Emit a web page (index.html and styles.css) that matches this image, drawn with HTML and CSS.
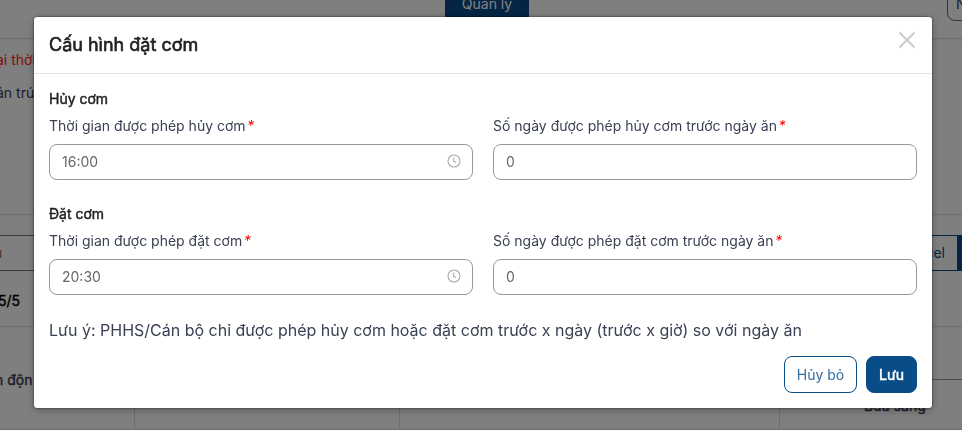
FILE: index.html
```html
<!DOCTYPE html>
<html lang="vi">
<head>
<meta charset="utf-8">
<title>Cấu hình đặt cơm</title>
<link rel="stylesheet" href="styles.css">
</head>
<body>
<div class="page">
  <header class="topbar">
    <div class="tab">Quản lý</div>
    <div class="account">N</div>
  </header>
  <section class="notes">
    <p class="note note-red">ại thời</p>
    <p class="note">án trú</p>
  </section>
  <section class="toolbar">
    <div class="search">ú</div>
    <div class="export">cel</div>
    <div class="export-more"></div>
  </section>
  <div class="count">5/5</div>
  <section class="table">
    <div class="cell cell-name">n độn</div>
    <div class="cell"></div>
    <div class="cell"></div>
    <div class="cell cell-meal"><div class="cell-head"></div><div class="meal">Bữa sáng</div></div>
  </section>
</div>
<div class="overlay">
  <div class="modal" role="dialog">
    <div class="modal-header">
      <h1 class="title">Cấu hình đặt cơm</h1>
      <svg class="close" viewBox="0 0 18 18"><path d="M1.5 1.5l15 15M16.5 1.5l-15 15"/></svg>
    </div>
    <div class="modal-body">
      <section class="group">
        <h2 class="group-title">Hủy cơm</h2>
        <div class="fields">
          <div class="field">
            <label class="label">Thời gian được phép hủy cơm<em class="star">*</em></label>
            <div class="input"><span>16:00</span><svg class="clock" viewBox="0 0 14 14"><circle cx="7" cy="7" r="6"/><path d="M6.7 3.5v3.9l2.5 1.1"/></svg></div>
          </div>
          <div class="field">
            <label class="label">Số ngày được phép hủy cơm trước ngày ăn<em class="star">*</em></label>
            <div class="input"><span>0</span></div>
          </div>
        </div>
      </section>
      <section class="group">
        <h2 class="group-title">Đặt cơm</h2>
        <div class="fields">
          <div class="field">
            <label class="label">Thời gian được phép đặt cơm<em class="star">*</em></label>
            <div class="input"><span>20:30</span><svg class="clock" viewBox="0 0 14 14"><circle cx="7" cy="7" r="6"/><path d="M6.7 3.5v3.9l2.5 1.1"/></svg></div>
          </div>
          <div class="field">
            <label class="label">Số ngày được phép đặt cơm trước ngày ăn<em class="star">*</em></label>
            <div class="input"><span>0</span></div>
          </div>
        </div>
      </section>
      <p class="hint">Lưu ý: PHHS/Cán bộ chỉ được phép hủy cơm hoặc đặt cơm trước x ngày (trước x giờ) so với ngày ăn</p>
      <div class="actions">
        <button class="btn">Hủy bỏ</button>
        <button class="btn btn-primary">Lưu</button>
      </div>
    </div>
  </div>
</div>
</body>
</html>
```
FILE: styles.css
```css
* { box-sizing: border-box; }
body {
  margin: 0;
  height: 430px;
  overflow: hidden;
  font: 14px/20px Inter, "Liberation Sans", sans-serif;
  color: #3a4154;
}
h1, h2, p { margin: 0; }

.page { height: 430px; overflow: hidden; background: #fff; }
.topbar {
  display: flex;
  height: 39px;
  border-bottom: 1px solid #d8d8d8;
  box-shadow: 0 1px 2px rgba(0, 0, 0, .06);
}
.tab {
  flex: none;
  width: 84px;
  height: 22px;
  margin-left: 445px;
  border-radius: 0 0 4px 4px;
  background: #084c88;
  color: #fff;
  line-height: 7px;
  text-align: center;
  white-space: nowrap;
}
.account {
  flex: none;
  width: 60px;
  height: 31px;
  margin: -10px -45px 0 418px;
  padding: 3px 8px;
  border: 1px solid #666;
  border-radius: 8px;
  line-height: 20px;
}
.notes { height: 176px; padding-top: 11px; border-bottom: 1px solid #dcdcdc; }
.note { margin-left: -4px; height: 33px; white-space: nowrap; }
.note-red { color: #ff2020; }
.toolbar { display: flex; height: 56px; padding-top: 20px; }
.search {
  flex: none;
  width: 700px;
  height: 36px;
  margin-left: -14px;
  padding: 7px;
  border: 1px solid #777;
  color: #a76a50;
}
.export {
  flex: none;
  width: 90px;
  height: 36px;
  margin-left: 182px;
  padding: 7px 12px;
  border: 1px solid #084c88;
  color: #084c88;
  text-align: right;
}
.export-more { flex: none; width: 10px; height: 36px; background: #084c88; }
.count { height: 56px; padding-top: 20px; margin-left: -2px; border-bottom: 1px solid #dcdcdc; color: #000; -webkit-text-stroke: .4px; }
.table { display: grid; grid-template-columns: 135px 265px 380px 182px; height: 103px; border-bottom: 1px solid #dcdcdc; }
.cell { border-right: 1px solid #dcdcdc; }
.cell-name { padding-top: 43px; margin-left: -5px; -webkit-text-stroke: .4px; }
.cell-meal { border-right: 0; }
.cell-head { height: 53px; border-bottom: 1px solid #999; }
.meal { padding: 16px 0 0 84px; -webkit-text-stroke: .4px; }

.overlay { position: fixed; inset: 0; padding: 17px 30px 22px 34px; background: rgba(0, 0, 0, .5); }
.modal { height: 391px; border-radius: 3px; background: #fff; box-shadow: 0 0 2px rgba(0, 0, 0, .75), 0 2px 8px rgba(0, 0, 0, .3); }
.modal-header {
  display: flex;
  justify-content: space-between;
  height: 57px;
  padding: 14px 16px 0 15px;
  border-bottom: 1px solid #e5e5e5;
}
.title { font-size: 18px; line-height: 28px; font-weight: 400; color: #222; -webkit-text-stroke: .65px; }
.close { width: 18px; height: 18px; fill: none; stroke: #ccc; stroke-width: 2; }
.modal-body { padding: 15px 15px 0; }
.group { height: 115px; }
.group-title { font-size: 14px; line-height: 20px; font-weight: 400; color: #222; -webkit-text-stroke: .45px; }
.fields { display: grid; grid-template-columns: 1fr 1fr; gap: 20px; margin-top: 7px; }
.label { display: block; height: 28px; line-height: 20px; }
.star { margin-left: 1.5px; color: #f00; }
.input {
  display: flex;
  justify-content: space-between;
  align-items: center;
  height: 36px;
  padding: 0 11px 0 12px;
  border: 1px solid #999;
  border-radius: 8px;
  color: #666;
}
.clock { width: 14px; height: 14px; margin-top: -3px; fill: none; stroke: #aaa; stroke-width: 1.1; }
.hint { margin-top: -1px; font-size: 16px; line-height: 24px; }
.actions { display: flex; justify-content: flex-end; gap: 9px; margin-top: 14px; }
.btn {
  width: 73px;
  height: 37px;
  padding: 0;
  border: 1px solid #084c88;
  border-radius: 8px;
  background: #fff;
  font: inherit;
  color: #356d9f;
}
.btn-primary { width: 51px; background: #084c88; color: #fff; -webkit-text-stroke: .5px; }
```
